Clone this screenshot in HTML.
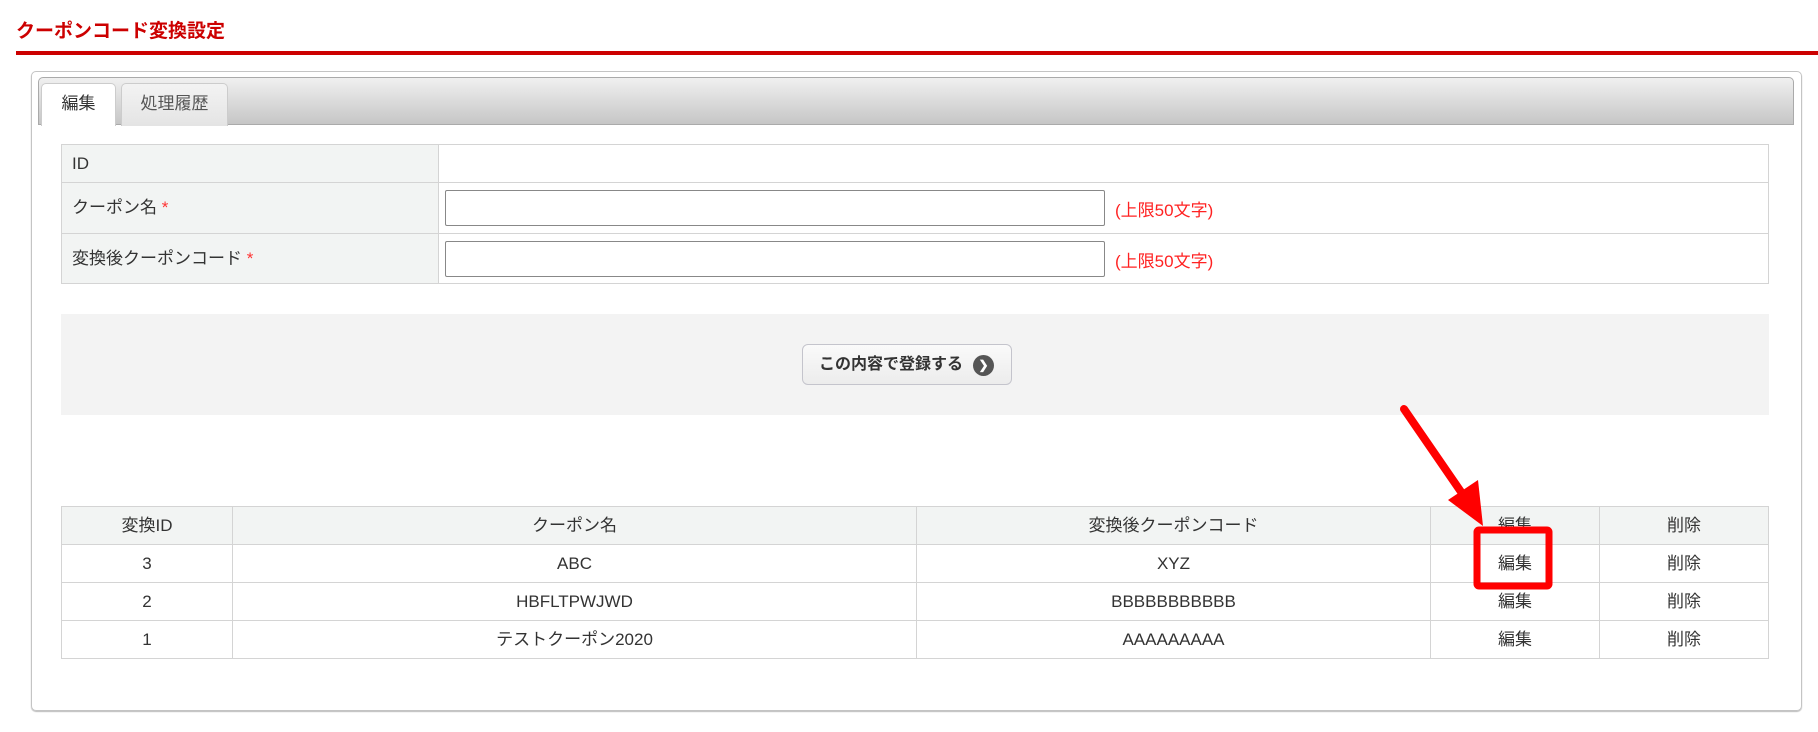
<!DOCTYPE html>
<html><head><meta charset="utf-8"><style>
*{box-sizing:border-box;margin:0;padding:0}
body{width:1818px;height:732px;background:#fff;font-family:"Liberation Sans","Noto Sans CJK JP",sans-serif;color:#333;font-size:17px;position:relative;overflow:hidden}
.abs{position:absolute}
.title{left:16px;top:16px;color:#c00;font-weight:bold;font-size:19px}
.redline{left:16px;top:51px;width:1802px;height:4px;background:#c00}
.panel{left:31px;top:71px;width:1771px;height:640px;border:1px solid #c4c4c4;border-radius:5px;box-shadow:0 1px 1px #bbb}
.tabbar{left:38px;top:77px;width:1756px;height:48px;border:1px solid #aaa;border-radius:5px 5px 0 0;background:linear-gradient(#f0f0f0,#c6c6c6)}
.tab{top:83px;height:43px;border:1px solid #ccc;border-bottom:none;border-radius:5px 5px 0 0;text-align:center;line-height:40px;font-size:17px}
table{border-collapse:collapse;position:absolute}
td{border:1px solid #d4d4d4;line-height:1.15}
.form td.l{background:#f2f4f3;padding-left:10px}
.star{color:#f33}
.inp{position:absolute;left:445px;width:660px;height:36px;border:1px solid #888;border-radius:2px;background:#fff}
.note{position:absolute;left:1115px;color:#f22}
.list td{text-align:center;height:38px}
.list tr.h td{background:#f2f4f3}
.gray{left:61px;top:314px;width:1708px;height:101px;background:#f3f3f3}
.btn{left:802px;top:344px;width:210px;height:41px;border:1px solid #c4c4cc;border-radius:6px;background:linear-gradient(#fafafa,#ececec);font-weight:bold;font-size:16px;color:#333;line-height:39px;padding-left:16px}
.btn .ic{position:absolute;right:17px;top:10px;width:21px;height:21px;border-radius:50%;background:#555;color:#fff;font-size:12px;line-height:21px;text-align:center}
</style></head><body>
<div class="abs title">クーポンコード変換設定</div>
<div class="abs redline"></div>
<div class="abs panel"></div>
<div class="abs tabbar"></div>
<div class="abs tab" style="left:41px;width:75px;background:#fff;color:#333">編集</div>
<div class="abs tab" style="left:121px;width:107px;background:linear-gradient(#f3f3f3,#e4e4e4);color:#555">処理履歴</div>

<table class="form" style="left:61px;top:144px;width:1708px">
<tr style="height:38px"><td class="l" style="width:377px">ID</td><td></td></tr>
<tr style="height:51px"><td class="l">クーポン名 <span class="star">*</span></td><td></td></tr>
<tr style="height:50px"><td class="l">変換後クーポンコード <span class="star">*</span></td><td></td></tr>
</table>
<div class="inp" style="top:190px"></div><div class="note" style="top:196px">(上限50文字)</div>
<div class="inp" style="top:241px"></div><div class="note" style="top:247px">(上限50文字)</div>

<div class="abs gray"></div>
<div class="abs btn">この内容で登録する<span class="ic">❯</span></div>

<table class="list" style="left:61px;top:506px;width:1708px">
<tr class="h"><td style="width:171px">変換ID</td><td style="width:684px">クーポン名</td><td style="width:514px">変換後クーポンコード</td><td style="width:169px">編集</td><td>削除</td></tr>
<tr><td>3</td><td>ABC</td><td>XYZ</td><td>編集</td><td>削除</td></tr>
<tr><td>2</td><td>HBFLTPWJWD</td><td>BBBBBBBBBBB</td><td>編集</td><td>削除</td></tr>
<tr><td>1</td><td>テストクーポン2020</td><td>AAAAAAAAA</td><td>編集</td><td>削除</td></tr>
</table>

<svg class="abs" style="left:0;top:0" width="1818" height="732">
<line x1="1404" y1="409" x2="1468" y2="502" stroke="#f00" stroke-width="8" stroke-linecap="round"/>
<polygon points="1483,526 1448,500 1478,480" fill="#f00"/>
<rect x="1477" y="530" width="72" height="56" fill="none" stroke="#f00" stroke-width="7" rx="2"/>
</svg>
</body></html>
